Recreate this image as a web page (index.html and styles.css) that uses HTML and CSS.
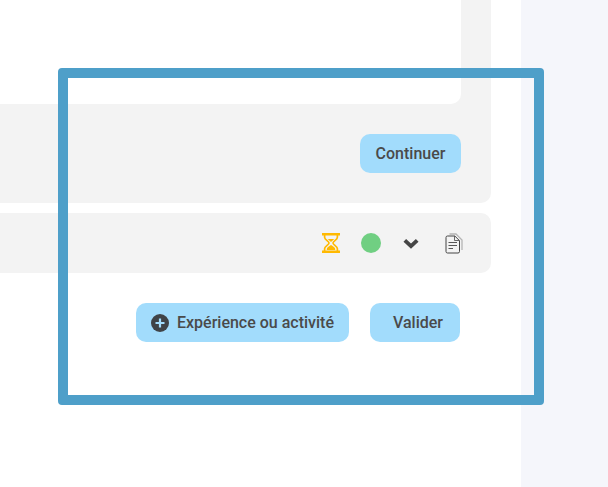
FILE: index.html
```html
<!DOCTYPE html>
<html>
<head>
  <title>Expérience</title>
  <meta charset="utf-8">
  <link rel="stylesheet" href="styles.css">
</head>
<body>

  <div class="page">
    <div class="main">
      <div class="panel">
        <div class="panel-body"></div>
        <div class="panel-actions">
          <button class="btn btn-continue" type="button">Continuer</button>
        </div>
      </div>

      <div class="status-bar">
        <svg class="icon-wait" width="20" height="20" viewBox="0 0 20 20">
          <path d="M1 1.2h18M1 18.8h18" fill="none" stroke="#ffb900" stroke-width="2.4"/>
          <path d="M3.6 2v2.2c0 2.6 4.4 4 4.4 5.8s-4.400 3.200-4.400 5.800V18M16.400 2v2.200c0 2.600-4.400 4-4.400 5.800s4.400 3.200 4.400 5.800V18" fill="none" stroke="#ffb900" stroke-width="1.700"/>
          <path d="M6.800 6h6.400L10 9zM5.800 17v-1.200c0-1.500 2.900-2.800 4.200-3.800 1.300 1 4.200 2.300 4.200 3.800V17z" fill="#ffb900"/>
        </svg>
        <span class="dot"></span>
        <svg class="icon-chevron" width="16" height="11" viewBox="0 0 16 11">
          <path d="M1.800 2.300L8 8.200l6.200-5.900" fill="none" stroke="#454545" stroke-width="3.800"/>
        </svg>
        <svg class="icon-doc" width="18" height="21" viewBox="0 0 18 21">
          <path d="M4.500 1h6.500l6 6V17" fill="none" stroke="#b4b4b4" stroke-width="1.300"/>
          <path d="M2.500 3h7.300l4.700 4.700V18.500a1.500 1.500 0 0 1-1.500 1.500H2.500A1.500 1.500 0 0 1 1 18.500V4.500A1.500 1.500 0 0 1 2.500 3z" fill="#f3f3f3" stroke="#454545" stroke-width="1"/>
          <path d="M9.500 3v4.500h5" fill="none" stroke="#454545" stroke-width="0.800"/>
          <path d="M3.500 9.500h8.500M3.500 12.500h8.500M3.500 15.500h4.500" fill="none" stroke="#454545" stroke-width="0.900"/>
        </svg>
      </div>

      <div class="form-actions">
        <button class="btn btn-add" type="button">
          <svg width="18" height="18" viewBox="0 0 18 18">
            <circle cx="9" cy="9" r="9" fill="#3f4347"/>
            <path d="M9 4.500v9M4.500 9h9" stroke="#a2dcfc" stroke-width="2.200"/>
          </svg>
          Expérience ou activité
        </button>
        <button class="btn btn-validate" type="button">Valider</button>
      </div>
    </div>
    <div class="sidebar"></div>
  </div>

  <div class="highlight"></div>

</body>
</html>
```

FILE: styles.css
```css
html, body {
  margin: 0;
  height: 100%;
  overflow: hidden;
}
body {
  font-family: Roboto, sans-serif;
  background-color: #fff;
}
.page {
  display: flex;
  height: 487px;
}
.main {
  width: 491px;
  padding-right: 30px;
}
.sidebar {
  flex: 1;
  background-color: #f5f6fb;
}
.panel {
  height: 203px;
  padding-right: 30px;
  box-sizing: border-box;
  background-color: #f3f3f3;
  border-radius: 0 0 10px 0;
}
.panel-body {
  height: 104px;
  background-color: #fff;
  border-radius: 0 0 10px 0;
}
.panel-actions {
  display: flex;
  justify-content: flex-end;
  padding-top: 30px;
}
.btn {
  height: 39px;
  padding: 0;
  border: none;
  border-radius: 10px;
  background-color: #a2dcfc;
  color: #4a4a4a;
  font-family: Roboto, sans-serif;
  font-size: 16px;
  font-weight: 500;
  cursor: pointer;
}
.btn-continue {
  width: 101px;
}
.status-bar {
  display: flex;
  align-items: center;
  height: 60px;
  margin-top: 10px;
  padding-right: 28px;
  box-sizing: border-box;
  justify-content: flex-end;
  background-color: #f3f3f3;
  border-radius: 0 10px 10px 0;
}
.icon-wait {
  margin-right: 20px;
}
.dot {
  width: 20px;
  height: 20px;
  margin-right: 22px;
  border-radius: 50%;
  background-color: #70cf82;
}
.icon-chevron {
  margin-right: 26px;
}
.form-actions {
  display: flex;
  justify-content: flex-end;
  gap: 21px;
  margin-top: 30px;
  padding-right: 31px;
}
.btn-add {
  display: flex;
  align-items: center;
  gap: 8px;
  width: 213px;
  padding-left: 15px;
}
.btn-validate {
  width: 90px;
  padding-left: 6px;
}
.highlight {
  position: absolute;
  left: 58px;
  top: 68px;
  width: 466px;
  height: 317px;
  border: 10px solid #4e9fc9;
  border-radius: 4px;
}
```
